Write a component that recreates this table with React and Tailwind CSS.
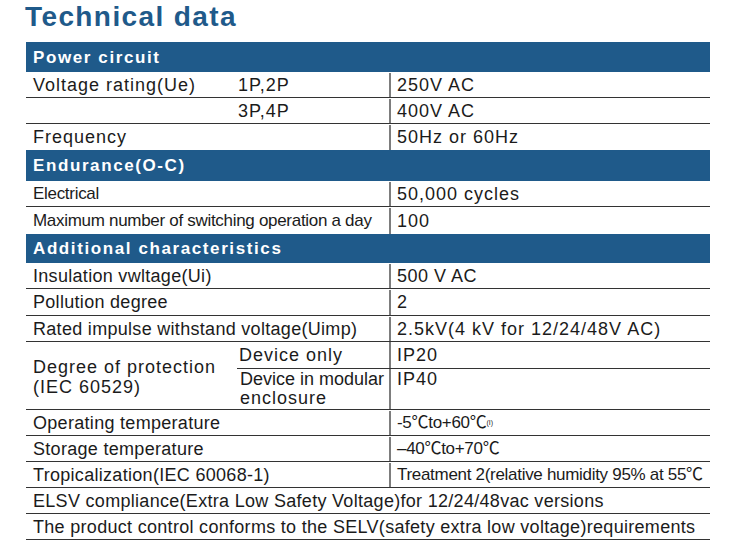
const font = "font-['Liberation_Sans','Noto_Sans_CJK_SC',sans-serif]";
const wide = "text-[18px] tracking-[1px]";
const plain = "text-[18px] tracking-[0.3px]";
const narrow = "text-[17px] tracking-[-0.3px]";

function Header({ title, h }) {
    return (
        <div className={`flex items-center bg-[#1f5a8a] pl-[7px] pt-[1px] text-[17px] font-bold tracking-[1.6px] text-white ${h}`}>
            {title}
        </div>
    );
}

function Row({ h = "h-[26px]", line = true, label, labelCls, sub, value, valueCls }) {
    return (
        <div className={`flex pt-[1px] ${h} ${line ? "border-b border-[#333]" : ""}`}>
            <div className="flex w-[363px] items-center">
                <div className={`pl-[7px] ${sub !== undefined ? "w-[211px]" : ""} ${labelCls}`}>{label}</div>
                {sub !== undefined && <div className={`pl-[1px] ${wide}`}>{sub}</div>}
            </div>
            <div className={`flex flex-1 items-center border-l-2 border-[#7d7d7d] pl-[6px] ${valueCls}`}>{value}</div>
        </div>
    );
}

function Full({ text }) {
    return (
        <div className={`flex h-[26px] items-center border-b border-[#333] pl-[7px] pt-[1px] ${plain}`}>{text}</div>
    );
}

export default function App() {
    return (
        <div className={`h-[557px] w-[732px] bg-white text-[#1b1b1b] ${font}`}>
            <div className="h-[42px] pl-[25px] pt-[3px] text-[28px] font-bold leading-none tracking-[1.4px] text-[#1f5a8a]">
                Technical data
            </div>
            <div className="ml-[26px] flex w-[684px] flex-col">
                <Header title="Power circuit" h="h-[30px]" />
                <Row label="Voltage rating(Ue)" labelCls={wide} sub="1P,2P" value="250V AC" valueCls={wide} />
                <Row label="" labelCls={wide} sub="3P,4P" value="400V AC" valueCls={wide} />
                <Row label="Frequency" labelCls={wide} value="50Hz or 60Hz" valueCls={wide} line={false} />

                <Header title="Endurance(O-C)" h="h-[31px]" />
                <Row label="Electrical" labelCls={narrow} value="50,000 cycles" valueCls={wide} />
                <Row h="h-[27px]" label="Maximum number of switching operation a day" labelCls={narrow} value="100" valueCls={wide} line={false} />

                <Header title="Additional characteristics" h="h-[29px]" />
                <Row label="Insulation vwltage(Ui)" labelCls={plain} value="500 V AC" valueCls="text-[18px] tracking-[0.5px]" />
                <Row h="h-[27px]" label="Pollution degree" labelCls={plain} value="2" valueCls={wide} />
                <Row label="Rated impulse withstand voltage(Uimp)" labelCls={plain} value="2.5kV(4 kV for 12/24/48V AC)" valueCls={wide} />

                <div className="flex h-[68px] border-b border-[#333]">
                    <div className={`flex w-[211px] flex-col justify-center pl-[7px] pt-[2px] leading-[20px] ${wide}`}>
                        <span>Degree of protection</span>
                        <span>(IEC 60529)</span>
                    </div>
                    <div className="flex flex-1 flex-col">
                        <div className="flex h-[27px] border-b border-[#333]">
                            <div className={`flex w-[152px] items-center pl-[2px] ${wide}`}>Device only</div>
                            <div className={`flex flex-1 items-center border-l-2 border-[#7d7d7d] pl-[6px] ${wide}`}>IP20</div>
                        </div>
                        <div className="flex flex-1">
                            <div className="flex w-[152px] flex-col pl-[3px] pt-[1px] text-[18px] leading-[19px]">
                                <span className="tracking-[0px]">Device in modular</span>
                                <span className="tracking-[1px]">enclosure</span>
                            </div>
                            <div className={`flex-1 border-l-2 border-[#7d7d7d] pl-[6px] pt-[1px] leading-[19px] ${wide}`}>IP40</div>
                        </div>
                    </div>
                </div>

                <Row label="Operating temperature" labelCls={plain} valueCls={narrow} value={
                    <span>-5℃to+60℃<sup className="text-[7px] tracking-normal">(I)</sup></span>
                } />
                <Row label="Storage temperature" labelCls={plain} value="–40℃to+70℃" valueCls={narrow} />
                <Row label="Tropicalization(IEC 60068-1)" labelCls={plain} value="Treatment 2(relative humidity 95% at 55℃" valueCls={narrow} />
                <Full text="ELSV compliance(Extra Low Safety Voltage)for 12/24/48vac versions" />
                <Full text="The product control conforms to the SELV(safety extra low voltage)requirements" />
            </div>
        </div>
    );
}
